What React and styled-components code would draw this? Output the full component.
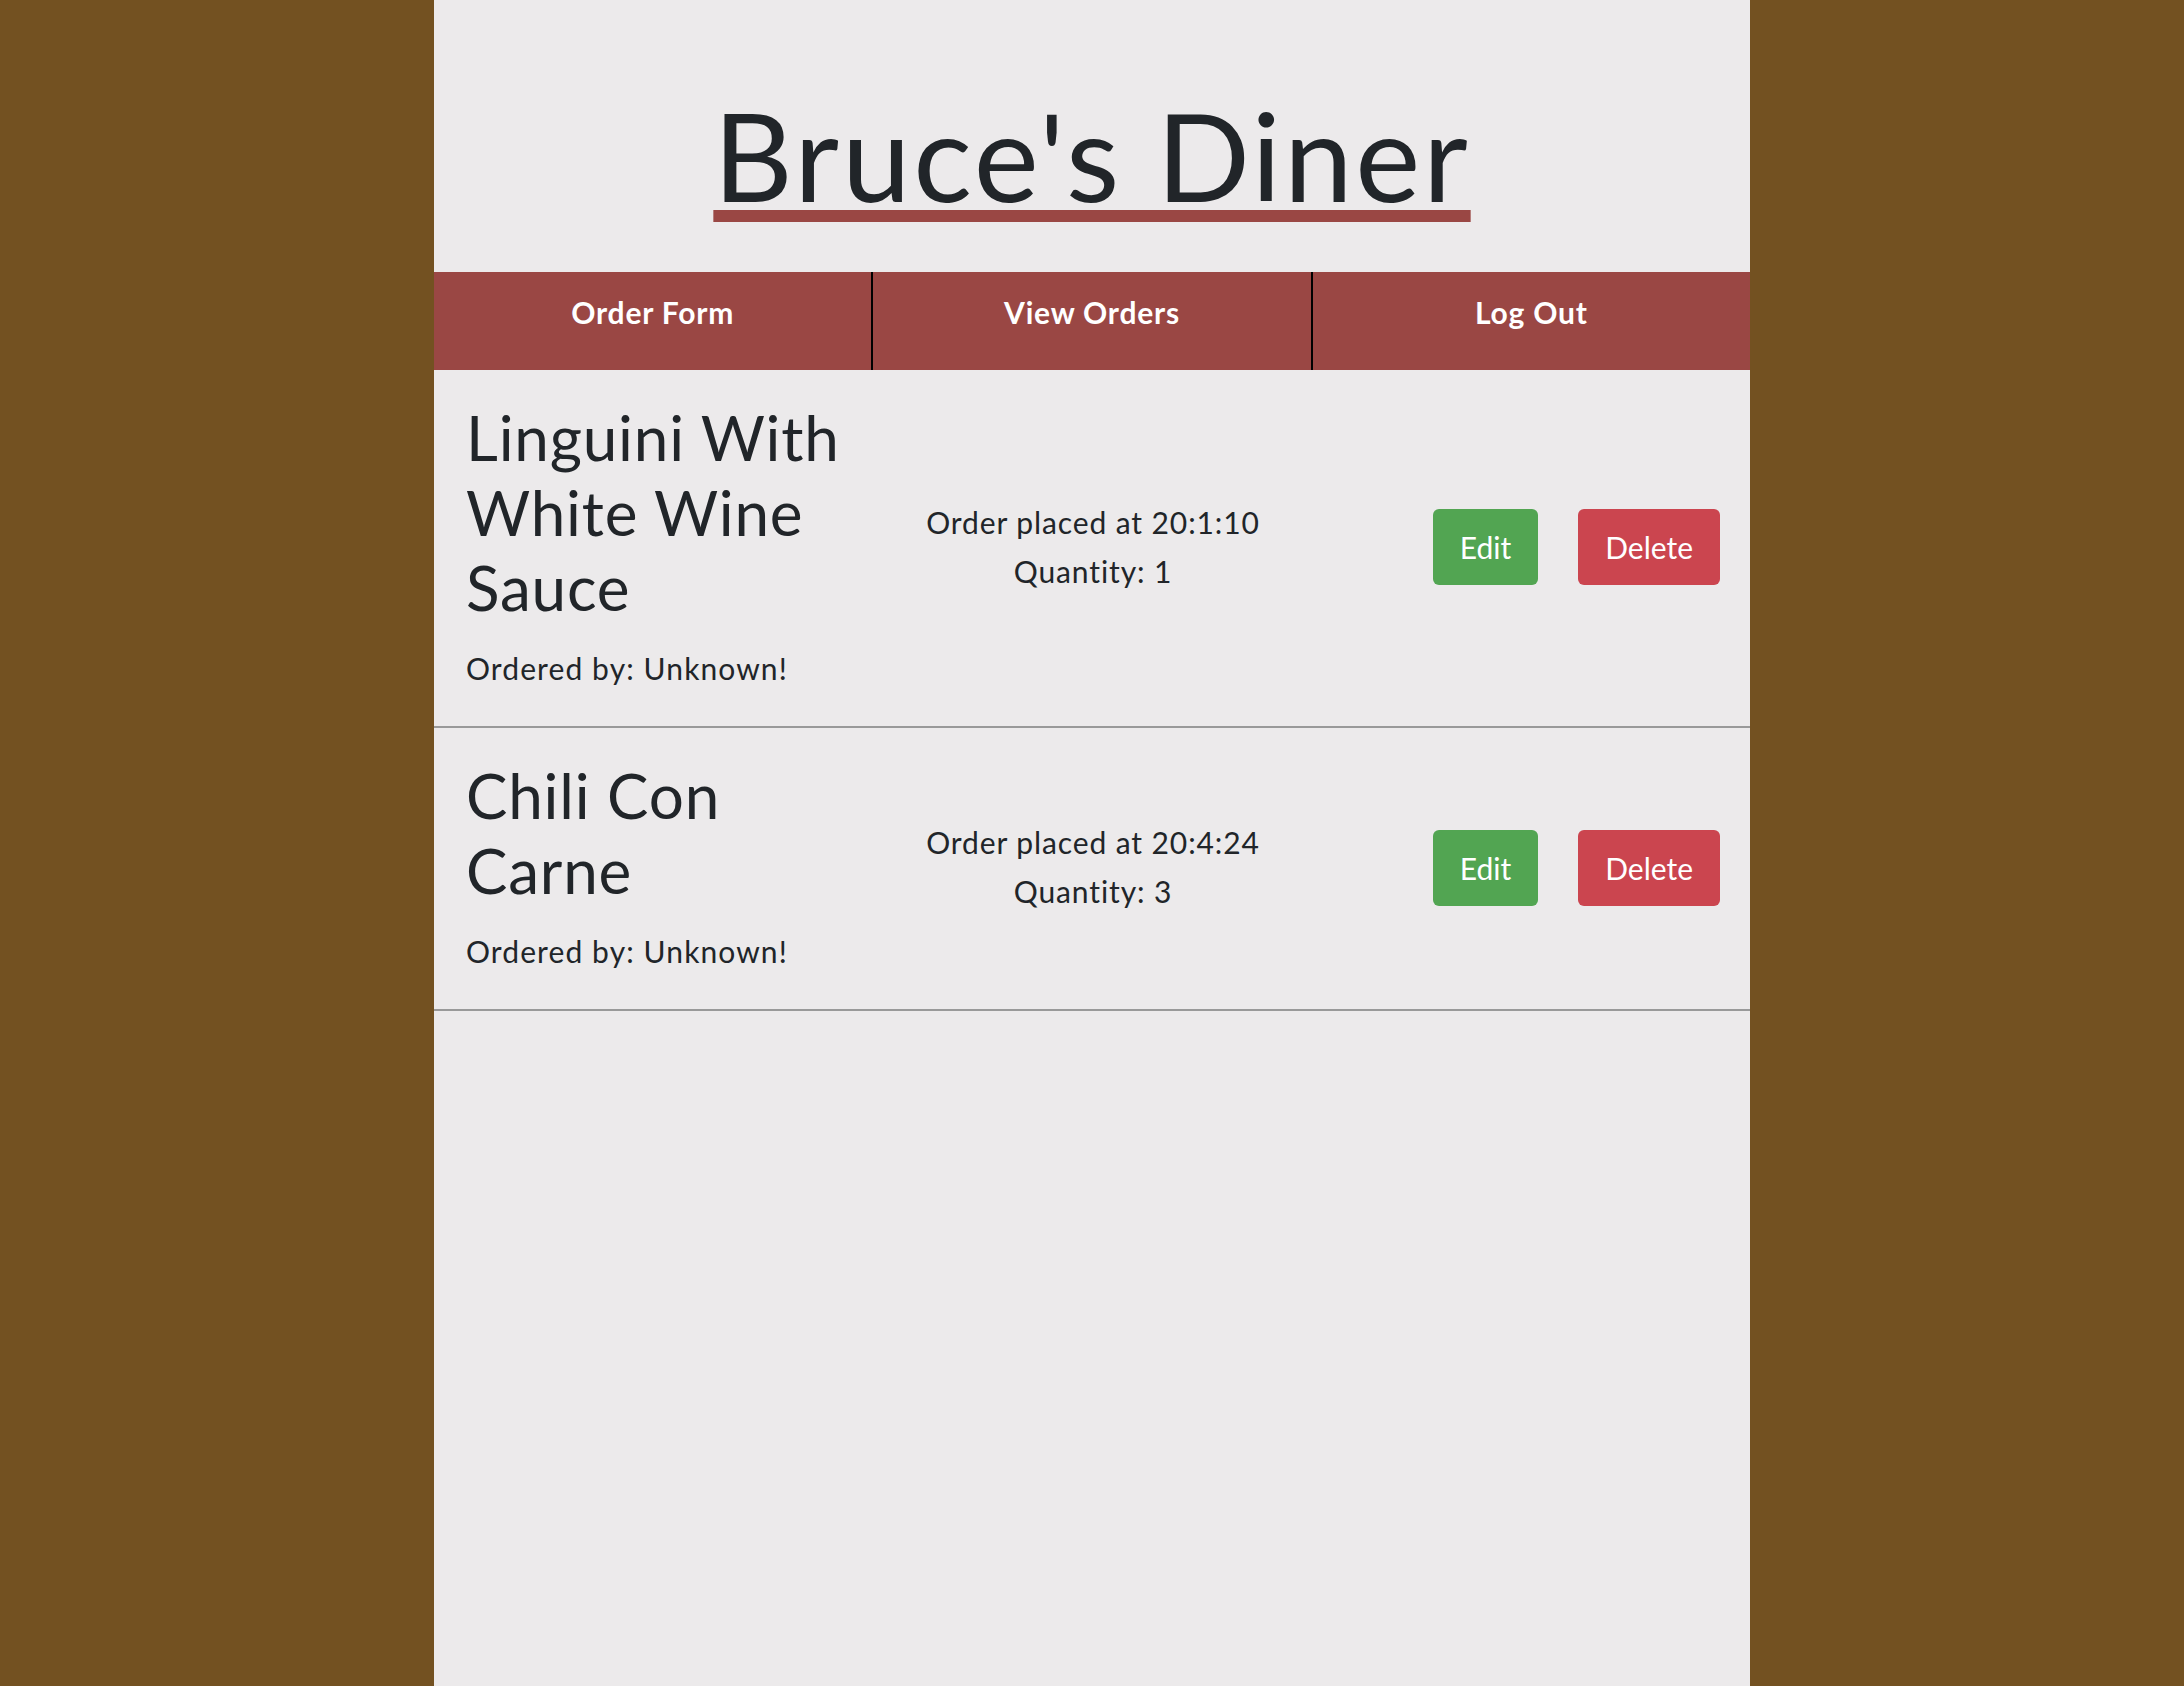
import React from 'react'
import styled, { createGlobalStyle } from 'styled-components'

const GlobalStyle = createGlobalStyle`
  html, body {
    margin: 0;
    padding: 0;
    background-color: #735121;
    font-family: Lato, "Open Sans", sans-serif;
    color: #212529;
  }
`

const Page = styled.div`
  width: 1316px;
  min-height: 100vh;
  margin: 0 auto;
  background-color: #eceaeb;
  display: flex;
  flex-direction: column;
`

const Header = styled.header`
  padding: 81px 0 43px;
  text-align: center;
`

const Title = styled.h1`
  margin: 0;
  font-size: 123px;
  font-weight: 400;
  line-height: 1.2;
  letter-spacing: 2.8px;
  text-decoration: underline;
  text-decoration-color: #9a4744;
  text-decoration-thickness: 12px;
  text-underline-offset: 8px;
`

const Nav = styled.nav`
  display: flex;
  height: 98px;
  background-color: #9a4744;
`

const NavItem = styled.a`
  flex: 1;
  padding-top: 22px;
  text-align: center;
  color: #fff;
  font-size: 30px;
  font-weight: 700;
  line-height: 1.2;
  letter-spacing: 0.8px;
  text-decoration: none;
  & + & {
    border-left: 2px solid #000;
  }
`

const List = styled.div`
  display: flex;
  flex-direction: column;
`

const Row = styled.div`
  display: flex;
  align-items: center;
  padding: 30px 30px 35px 32px;
  border-bottom: 2px solid #999;
`

const Left = styled.div`
  flex: 1;
`

const DishName = styled.h2`
  margin: 0 0 21px;
  max-width: 400px;
  font-size: 62px;
  font-weight: 400;
  line-height: 75px;
  letter-spacing: 0.8px;
`

const OrderedBy = styled.p`
  margin: 0;
  font-size: 30px;
  line-height: 45px;
  letter-spacing: 1.1px;
`

const Middle = styled.div`
  flex: 1;
  text-align: center;
  font-size: 30px;
  line-height: 49px;
  letter-spacing: 0.9px;
  margin-top: 3px;
`

const Actions = styled.div`
  flex: 1;
  display: flex;
  justify-content: flex-end;
  gap: 40px;
  margin-top: 4px;
`

const Button = styled.button`
  height: 76px;
  padding: 0 27px;
  border: none;
  border-radius: 6px;
  background-color: ${props => props.color};
  color: #fff;
  font-family: Lato, "Open Sans", sans-serif;
  font-size: 30px;
  cursor: pointer;
`

const orders = [
  { name: 'Linguini With White Wine Sauce', time: '20:1:10', qty: 1 },
  { name: 'Chili Con Carne', time: '20:4:24', qty: 3 },
]

const App = () => {
  return (
    <>
      <GlobalStyle />
      <Page>
        <Header>
          <Title>Bruce's Diner</Title>
        </Header>
        <Nav>
          <NavItem>Order Form</NavItem>
          <NavItem>View Orders</NavItem>
          <NavItem>Log Out</NavItem>
        </Nav>
        <List>
          {orders.map(o => (
            <Row key={o.name}>
              <Left>
                <DishName>{o.name}</DishName>
                <OrderedBy>Ordered by: Unknown!</OrderedBy>
              </Left>
              <Middle>
                <div>Order placed at {o.time}</div>
                <div>Quantity: {o.qty}</div>
              </Middle>
              <Actions>
                <Button color="#52a552">Edit</Button>
                <Button color="#cb454f">Delete</Button>
              </Actions>
            </Row>
          ))}
        </List>
      </Page>
    </>
  )
}

export default App
